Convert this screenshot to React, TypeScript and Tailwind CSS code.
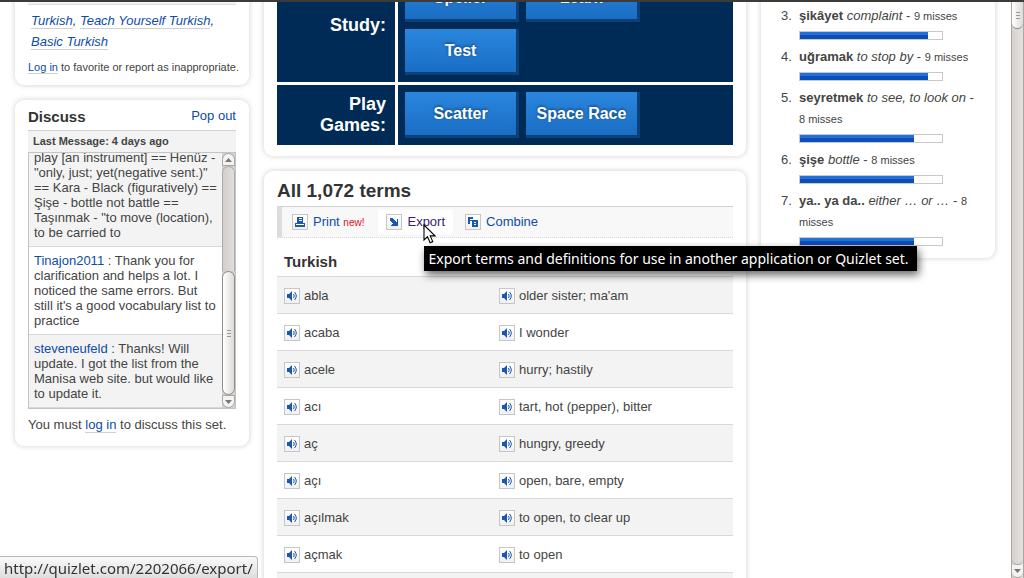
import React from 'react';

interface Term {
    word: string;
    definition: string;
}

interface Missed {
    word: string;
    meaning: string;
    misses: number;
}

const terms: Term[] = [
    { word: 'abla', definition: "older sister; ma'am" },
    { word: 'acaba', definition: 'I wonder' },
    { word: 'acele', definition: 'hurry; hastily' },
    { word: 'acı', definition: 'tart, hot (pepper), bitter' },
    { word: 'aç', definition: 'hungry, greedy' },
    { word: 'açı', definition: 'open, bare, empty' },
    { word: 'açılmak', definition: 'to open, to clear up' },
    { word: 'açmak', definition: 'to open' },
];

const missed: Missed[] = [
    { word: 'şikâyet', meaning: 'complaint', misses: 9 },
    { word: 'uğramak', meaning: 'to stop by', misses: 9 },
    { word: 'seyretmek', meaning: 'to see, to look on', misses: 8 },
    { word: 'şişe', meaning: 'bottle', misses: 8 },
    { word: 'ya.. ya da..', meaning: 'either … or …', misses: 8 },
];

const CARD = 'rounded-[9px] bg-white px-[13px] shadow-[0_0_5px_1px_rgba(0,0,0,0.14)]';
const LINK = 'text-[#0d4ca8]';
const UNDERLINED = 'border-b border-[#d0d0d0] text-[#0d4ca8]';
const ICON_BOX = 'flex h-4 w-4 shrink-0 items-center justify-center border border-[#c6c6c6] bg-linear-to-b from-white to-[#f0f0f0]';

const SpeakerButton: React.FC<{ label: string }> = ({ label }) => (
    <button type="button" aria-label={`Listen to ${label}`} className={ICON_BOX}>
        <svg width="12" height="12" viewBox="0 0 12 12" className="shrink-0">
            <path d="M1 4h2l3-3v10L3 8H1z" fill="#1b57ad" />
            <path d="M7.5 4q1.5 2 0 4M8.5 2q3.6 4 0 8" fill="none" stroke="#1b57ad" />
        </svg>
    </button>
);

const PrintIcon = () => (
    <span className={ICON_BOX}>
        <svg width="12" height="12" viewBox="0 0 12 12" shapeRendering="crispEdges" className="shrink-0">
            <path d="M3 1h6v6h2v4H1V7h2z" fill="#1b57ad" />
            <path d="M5 2h3v1H5zM5 4h3v1H5zM2 8h8v1H2z" fill="#fff" />
        </svg>
    </span>
);

const ExportIcon = () => (
    <span className={ICON_BOX}>
        <svg width="12" height="12" viewBox="0 0 12 12" shapeRendering="crispEdges" className="shrink-0">
            <path d="M2 2h3v1h1v1h1v1h1v1h1V3h1v7H3V9h1V8h1V7H4V6H3V5H2z" fill="#1b57ad" />
        </svg>
    </span>
);

const CombineIcon = () => (
    <span className={ICON_BOX}>
        <svg width="12" height="12" viewBox="0 0 12 12" shapeRendering="crispEdges" className="shrink-0">
            <path d="M1 1h5v2H3v1h2v1H3v3H1z" fill="#1b57ad" />
            <path d="M5 4h6v7H5z" fill="#1b57ad" />
            <path d="M7 6h2v1H7zM7 8h2v1H7z" fill="#fff" />
        </svg>
    </span>
);

const Grip = () => (
    <span className="flex flex-col gap-0.5">
        <i className="h-px w-1 bg-[#999]" />
        <i className="h-px w-1 bg-[#999]" />
        <i className="h-px w-1 bg-[#999]" />
    </span>
);

const Arrow: React.FC<{ up?: boolean }> = ({ up }) => (
    <svg width="7" height="4" viewBox="0 0 7 4">
        <path d={up ? 'M0 4l3.5-4L7 4z' : 'M0 0l3.5 4L7 0z'} fill="#777" />
    </svg>
);

const MessageScrollbar = () => (
    <div className="flex w-[13px] shrink-0 flex-col bg-[#d3cfcc]">
        <div className="flex h-[13px] items-center justify-center rounded-t-full border border-[#aaa6a2] bg-[#f4f3f2]">
            <Arrow up />
        </div>
        <div className="flex-1 rounded-t-full border-x border-t border-[#b0aca8] bg-linear-to-r from-[#d3cecb] to-[#e2dedc]" />
        <div className="flex h-[124px] items-center justify-center rounded-full border border-[#8f8b87] bg-linear-to-r from-white to-[#dedbd9]">
            <Grip />
        </div>
        <div className="flex h-[13px] items-center justify-center rounded-b-full border border-[#aaa6a2] bg-[#f4f3f2]">
            <Arrow />
        </div>
    </div>
);

const PageScrollbar = () => (
    <div className="flex w-[13px] shrink-0 flex-col border-x border-[#aaa6a2] bg-linear-to-r from-[#d6d2cf] to-[#e4e1df]">
        <div className="flex h-[27px] items-center justify-center rounded-b-full border-b border-[#8f8b87] bg-linear-to-r from-white to-[#dedbd9]">
            <Grip />
        </div>
        <div className="flex-1 rounded-b-full border-b border-[#aaa6a2]" />
        <div className="flex h-[13px] items-center justify-center rounded-b-full border-b border-[#aaa6a2] bg-[#f4f3f2]">
            <Arrow />
        </div>
    </div>
);

const ModeButton: React.FC<{ children: React.ReactNode }> = ({ children }) => (
    <button
        type="button"
        className="h-[46px] w-[114px] border-r-[3px] border-b-[3px] border-[#0b4078] bg-linear-to-b from-[#2b86de] to-[#186cc2] bg-origin-border text-base font-bold text-white [text-shadow:0_-1px_3px_rgba(0,0,0,0.5)]"
    >
        {children}
    </button>
);

const LeftColumn = () => (
    <aside className="flex flex-col gap-[15px]">
        <section className={`${CARD} -mt-3 h-[95px] pt-3`}>
            <div className="h-[3px] border-b border-[#ddd] bg-[#f3f3f3]" />
            <p className="px-[3px] pt-[5px] leading-[21px] italic">
                <a href="#turkish" className={UNDERLINED}>Turkish</a>,{' '}
                <a href="#teach" className={UNDERLINED}>Teach Yourself Turkish</a>,{' '}
                <a href="#basic" className={UNDERLINED}>Basic Turkish</a>
            </p>
            <p className="pt-2 text-[11px] leading-[15px] whitespace-nowrap">
                <a href="#login" className={UNDERLINED}>Log in</a> to favorite or report as inappropriate.
            </p>
        </section>

        <section className={`${CARD} pt-[7px] pb-[13px]`}>
            <div className="flex h-[23px] justify-between leading-[18px]">
                <h2 className="pt-px text-[15px] font-bold text-[#333]">Discuss</h2>
                <a href="#popout" className={LINK}>Pop out</a>
            </div>
            <div className="h-[22px] border-t border-[#d0d0d0] bg-[#f3f3f3] px-[5px] text-[11px] leading-[21px] font-bold">
                Last Message: 4 days ago
            </div>
            <div className="flex h-[257px] border border-[#c4c4c4] leading-[15px]">
                <div className="flex min-w-0 flex-1 flex-col justify-end overflow-hidden">
                    <p className="border-b border-[#d8d8d8] bg-[#f3f3f3] px-[5px] pb-1.5">
                        play [an instrument] == Henüz - "only, just; yet(negative sent.)" == Kara - Black (figuratively) == Şişe - bottle not battle == Taşınmak - "to move (location), to be carried to
                    </p>
                    <p className="border-b border-[#d8d8d8] px-[5px] py-1.5">
                        <a href="#tinajon" className={LINK}>Tinajon2011</a> : Thank you for clarification and helps a lot. I noticed the same errors. But still it's a good vocabulary list to practice
                    </p>
                    <p className="border-b border-[#d8d8d8] bg-[#f3f3f3] px-[5px] py-1.5">
                        <a href="#steve" className={LINK}>steveneufeld</a> : Thanks! Will update. I got the list from the Manisa web site. but would like to update it.
                    </p>
                </div>
                <MessageScrollbar />
            </div>
            <p className="pt-[7px] leading-[17px]">
                You must <a href="#login" className={UNDERLINED}>log in</a> to discuss this set.
            </p>
        </section>
    </aside>
);

const Tools = () => (
    <nav className="flex h-8 items-center border-t border-b border-l-[5px] border-t-[#d0d0d0] border-b-[#d8d8d8] border-l-[#dcdcdc] bg-[#f8f8f8] pl-0.5 [border-bottom-style:dotted]">
        <a href="#print" className={`flex h-6 items-center gap-[5px] px-2 ${LINK}`}>
            <PrintIcon />
            <span>Print <small className="text-[10px] text-[#e01020]">new!</small></span>
        </a>
        <div className="relative ml-1.5">
            <a href="#export" className="flex h-6 items-center gap-[5px] bg-white px-2 text-[#3c1a78]">
                <ExportIcon />
                Export
            </a>
            <div role="tooltip" className="absolute top-9 left-[46px] z-10 bg-black pr-2 pl-1 font-['Noto_Sans',sans-serif] text-sm leading-[25px] whitespace-nowrap text-white shadow-[2px_4px_8px_rgba(0,0,0,0.6)]">
                Export terms and definitions for use in another application or Quizlet set.
            </div>
            <svg width="13" height="20" viewBox="0 0 13 20" className="absolute top-3.5 left-[45px] z-20">
                <path d="M1 1v15l3.5-3.2 2.6 6 2.7-1.2-2.6-5.7H12z" fill="#fff" stroke="#000" strokeWidth="1.1" />
            </svg>
        </div>
        <a href="#combine" className={`ml-1 flex h-6 items-center gap-[5px] px-2 ${LINK}`}>
            <CombineIcon />
            Combine
        </a>
    </nav>
);

const MiddleColumn = () => (
    <main className="-mt-[46px] flex min-w-0 flex-col gap-[15px]">
        <section className={`${CARD} pt-[13px] pb-[11px]`}>
            <div className="grid grid-cols-[118px_1fr] gap-[3px] text-white">
                <h3 className="flex items-center justify-end bg-[#002b56] pr-[9px] text-right text-lg leading-[21px] font-bold">Study:</h3>
                <div className="flex flex-wrap gap-[7px] bg-[#002b56] py-[7px] pr-[90px] pl-[7px]">
                    <ModeButton>Speller</ModeButton>
                    <ModeButton>Learn</ModeButton>
                    <ModeButton>Test</ModeButton>
                </div>
                <h3 className="flex items-center justify-end bg-[#002b56] pr-[9px] text-right text-lg leading-[21px] font-bold">Play<br />Games:</h3>
                <div className="flex flex-wrap gap-[7px] bg-[#002b56] p-[7px]">
                    <ModeButton>Scatter</ModeButton>
                    <ModeButton>Space Race</ModeButton>
                </div>
            </div>
        </section>

        <section className={`${CARD} pt-2`}>
            <h2 className="h-[27px] text-[19px] leading-[23px] font-bold text-[#333]">All 1,072 terms</h2>
            <Tools />
            <table className="w-full table-fixed text-left">
                <thead>
                    <tr className="h-[38px] border-b border-[#d8d8d8] text-[15px] text-[#333]">
                        <th className="w-[215px] px-[7px] pt-2.5">Turkish</th>
                        <td />
                    </tr>
                </thead>
                <tbody>
                    {terms.map(term => (
                        <tr key={term.word} className="h-[37px] border-b border-[#d8d8d8] odd:bg-[#f3f3f3]">
                            <td className="px-[7px] pt-[3px]">
                                <span className="flex items-center gap-1">
                                    <SpeakerButton label={term.word} />
                                    {term.word}
                                </span>
                            </td>
                            <td className="px-[7px] pt-[3px]">
                                <span className="flex items-center gap-1">
                                    <SpeakerButton label={term.definition} />
                                    {term.definition}
                                </span>
                            </td>
                        </tr>
                    ))}
                    <tr className="h-[37px] bg-[#f3f3f3]">
                        <td colSpan={2} />
                    </tr>
                </tbody>
            </table>
        </section>
    </main>
);

const RightColumn = () => (
    <aside>
        <section className={`${CARD} -mt-3 pt-[15px] pb-3`}>
            <ol start={3} className="list-none">
                {missed.map((item, index) => (
                    <li key={item.word} className="flex pb-1.5 last:pb-0">
                        <span className="w-[25px] shrink-0 pl-[7px] leading-[21px]">{index + 3}.</span>
                        <div className="min-w-0 flex-1">
                            <p className="leading-[21px]">
                                <b>{item.word}</b> <i>{item.meaning}</i> - <small className="text-[11px] leading-4">{item.misses} misses</small>
                            </p>
                            <div className="mt-[5px] h-[9px] w-36 border border-[#c8c8c8]">
                                <div
                                    className="h-full bg-linear-to-b from-[#276fd8] from-45% to-[#0c4fb8] to-45%"
                                    style={{ width: `${item.misses * 10}%` }}
                                />
                            </div>
                        </div>
                    </li>
                ))}
            </ol>
        </section>
    </aside>
);

const App: React.FC = () => {
    return (
        <div className="flex h-screen flex-col overflow-hidden bg-white font-['Liberation_Sans',Arial,sans-serif] text-[13px] text-[#444]">
            <div className="z-10 h-0.5 shrink-0 bg-[#3c3b37]" />
            <div className="flex min-h-0 flex-1">
                <div className="grid min-w-0 flex-1 grid-cols-[234px_minmax(0,1fr)_234px] items-start gap-[15px] overflow-hidden pr-4 pl-[15px]">
                    <LeftColumn />
                    <MiddleColumn />
                    <RightColumn />
                </div>
                <PageScrollbar />
            </div>
            <div className="fixed bottom-0 left-0 h-[22px] rounded-tr-[4px] border-t border-r border-[#b8b8b8] bg-linear-to-b from-[#fafafa] to-[#dedede] px-1 font-['Noto_Sans',sans-serif] text-[15px] leading-[22px] text-[#333]">
                http://quizlet.com/2202066/export/
            </div>
        </div>
    );
};

export default App;
